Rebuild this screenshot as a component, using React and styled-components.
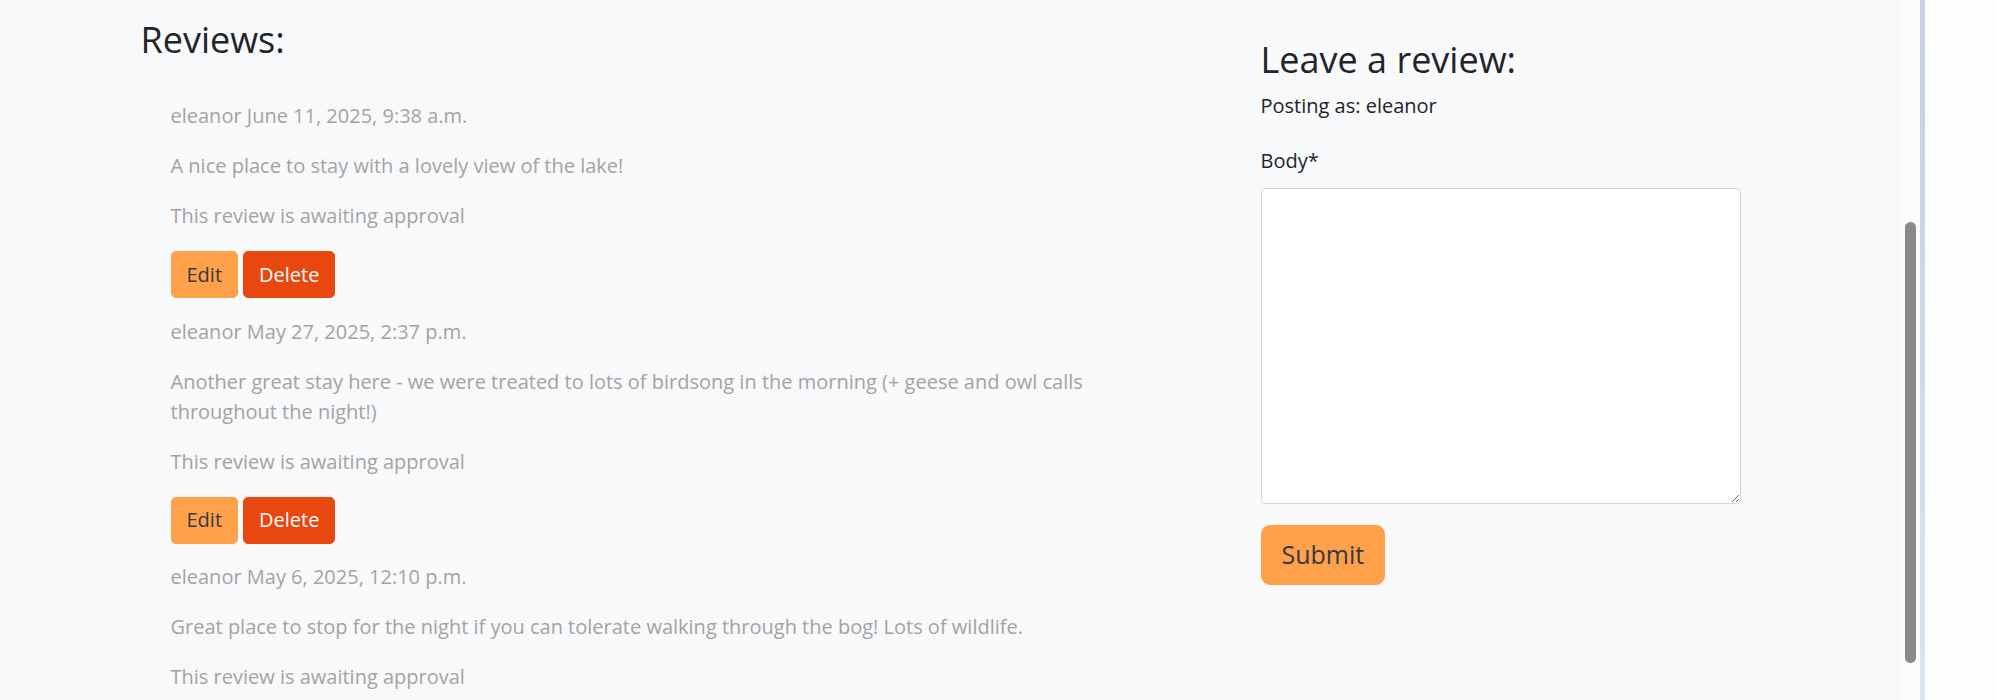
import React from 'react';
import styled, { createGlobalStyle } from 'styled-components';

const GlobalStyle = createGlobalStyle`
  html, body {
    margin: 0;
    padding: 0;
    background: #ffffff;
  }
  body {
    font-family: "Open Sans", "Noto Sans", sans-serif;
    font-size: 20px;
    line-height: 1.5;
    color: #212529;
  }
`;

const Frame = styled.div`
  display: flex;
  height: 700px;
  overflow: hidden;
`;

const Viewport = styled.div`
  width: 1901px;
  flex-shrink: 0;
  background: #f8f9fa;
  overflow: hidden;
`;

const Container = styled.div`
  width: 1650px;
  margin: 0 auto;
  padding-top: 18px;
  display: flex;
`;

const MainCol = styled.section`
  width: 1100px;
  box-sizing: border-box;
  padding: 0 15px;
`;

const SideCol = styled.aside`
  width: 550px;
  box-sizing: border-box;
  padding: 20px 35px 0;
`;

const Heading = styled.h3`
  margin: 0 0 10.3px;
  font-size: 36px;
  font-weight: 500;
  line-height: 1.2;
  color: #212529;
`;

const ReviewList = styled.div`
  padding: 30px 30px 0;
`;

const Review = styled.article`
  color: #a3a3a3;
`;

const Text = styled.p`
  margin: 0 0 20px;
`;

const Actions = styled.div`
  display: flex;
  gap: 5px;
  margin-bottom: 18.5px;
`;

const Button = styled.button`
  font-family: inherit;
  font-size: ${p => (p.$large ? '25px' : '20px')};
  line-height: 1.5;
  padding: ${p => (p.$large ? '10px 20px' : '7.5px 15px')};
  border: 1px solid ${p => p.$bg};
  border-radius: ${p => (p.$large ? '9px' : '5px')};
  background: ${p => p.$bg};
  color: ${p => p.$fg};
  cursor: pointer;
`;

const Posting = styled.p`
  margin: 0 0 25px;
`;

const Label = styled.label`
  display: block;
  margin: 0 0 12px;
`;

const Area = styled.textarea`
  display: block;
  width: 100%;
  height: 316px;
  box-sizing: border-box;
  border: 1px solid #ced4da;
  border-radius: 5px;
  background: #ffffff;
  font-family: inherit;
  font-size: 20px;
  resize: both;
  margin-bottom: 20.6px;
`;

const ScrollTrack = styled.div`
  width: 19px;
  flex-shrink: 0;
  background: #fbfbfb;
  padding: 222px 4px 0 4px;
  box-sizing: border-box;
`;

const Thumb = styled.div`
  width: 11px;
  height: 441px;
  border-radius: 6px;
  background: #8a8a8a;
`;

const Edge = styled.div`
  width: 5px;
  flex-shrink: 0;
  background: linear-gradient(#c6cee1, #dce3f0);
`;

const Outside = styled.div`
  flex: 1;
  background: #fefefe;
`;

const reviews = [
  {
    meta: 'eleanor June 11, 2025, 9:38 a.m.',
    body: 'A nice place to stay with a lovely view of the lake!',
  },
  {
    meta: 'eleanor May 27, 2025, 2:37 p.m.',
    body: 'Another great stay here - we were treated to lots of birdsong in the morning (+ geese and owl calls throughout the night!)',
  },
  {
    meta: 'eleanor May 6, 2025, 12:10 p.m.',
    body: 'Great place to stop for the night if you can tolerate walking through the bog! Lots of wildlife.',
  },
];

const App = () => (
  <>
    <GlobalStyle />
    <Frame>
      <Viewport>
        <Container>
          <MainCol>
            <Heading>Reviews:</Heading>
            <ReviewList>
              {reviews.map((r, i) => (
                <Review key={i}>
                  <Text>{r.meta}</Text>
                  <Text>{r.body}</Text>
                  <Text>This review is awaiting approval</Text>
                  <Actions>
                    <Button $bg="#ffa04a" $fg="#343a40">Edit</Button>
                    <Button $bg="#e8480f" $fg="#ffffff">Delete</Button>
                  </Actions>
                </Review>
              ))}
            </ReviewList>
          </MainCol>
          <SideCol>
            <Heading>Leave a review:</Heading>
            <Posting>Posting as: eleanor</Posting>
            <form onSubmit={e => e.preventDefault()}>
              <Label htmlFor="body">Body*</Label>
              <Area id="body" name="body" />
              <Button $large $bg="#ffa04a" $fg="#343a40" type="submit">
                Submit
              </Button>
            </form>
          </SideCol>
        </Container>
      </Viewport>
      <ScrollTrack>
        <Thumb />
      </ScrollTrack>
      <Edge />
      <Outside />
    </Frame>
  </>
);

export default App;
